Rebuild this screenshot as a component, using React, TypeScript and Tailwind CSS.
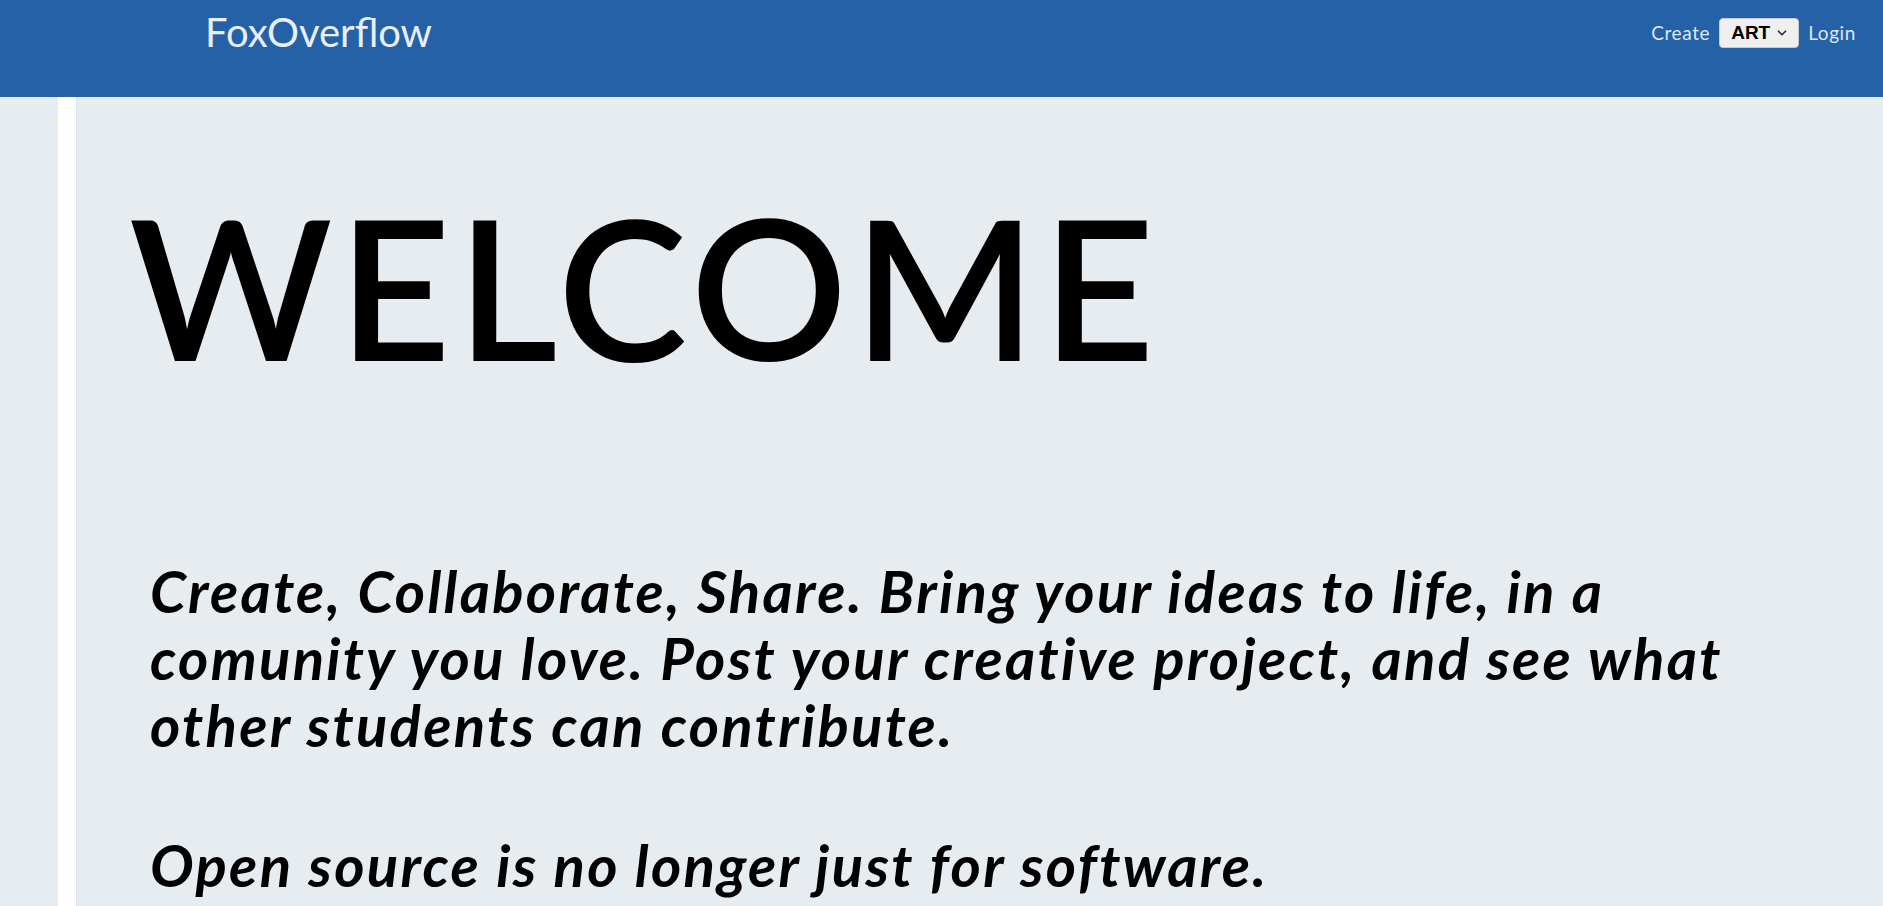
import { ChevronDown } from 'lucide-react'

const Header: React.FC = () => {
  return (
    <header className="h-[97px] bg-[#2561a6] flex justify-between items-start">
      <a href="/" className="ml-[205px] mt-[7px] text-[40px] leading-[50px] text-[#e9eff7] font-['Lato',sans-serif]">
        FoxOverflow
      </a>
      <nav className="flex items-center gap-[9px] mt-[18px] mr-[27px] font-['Lato',sans-serif] text-[19px] tracking-[0.6px] text-[#dde7f5]">
        <a href="/create">Create</a>
        <div className="flex items-center justify-between w-[80px] h-[30px] pl-[11px] pr-[9px] bg-[#efefef] border border-[#c9c9c9] rounded-[4px] text-black tracking-normal">
          <span className="font-bold text-[19px] font-['Liberation_Sans',sans-serif]">ART</span>
          <ChevronDown size={14} strokeWidth={3} className="text-[#333]" />
        </div>
        <a href="/login">Login</a>
      </nav>
    </header>
  )
}

const App: React.FC = () => {
  return (
    <div className="min-h-screen bg-[#e7ecf1] font-['Lato',sans-serif]">
      <Header />
      <div className="flex min-h-[809px]">
        <div className="w-[58px] shrink-0" />
        <div className="w-[19px] shrink-0 bg-white border-r border-[#dde3ea]" />
        <main className="flex-1 pt-[92px] pl-[52px]">
          <h1 className="text-[195px] leading-none font-semibold text-black tracking-[6px]">WELCOME</h1>
          <div className="mt-[173px] pl-[21px] w-[1620px] italic font-bold text-black text-[58px] leading-[67px] tracking-[2.3px]">
            <p>
              Create, Collaborate, Share. Bring your ideas to life, in a comunity you love. Post your creative project, and see what other students can contribute.
            </p>
            <p className="mt-[73px]">Open source is no longer just for software.</p>
          </div>
        </main>
      </div>
    </div>
  )
}

export default App
